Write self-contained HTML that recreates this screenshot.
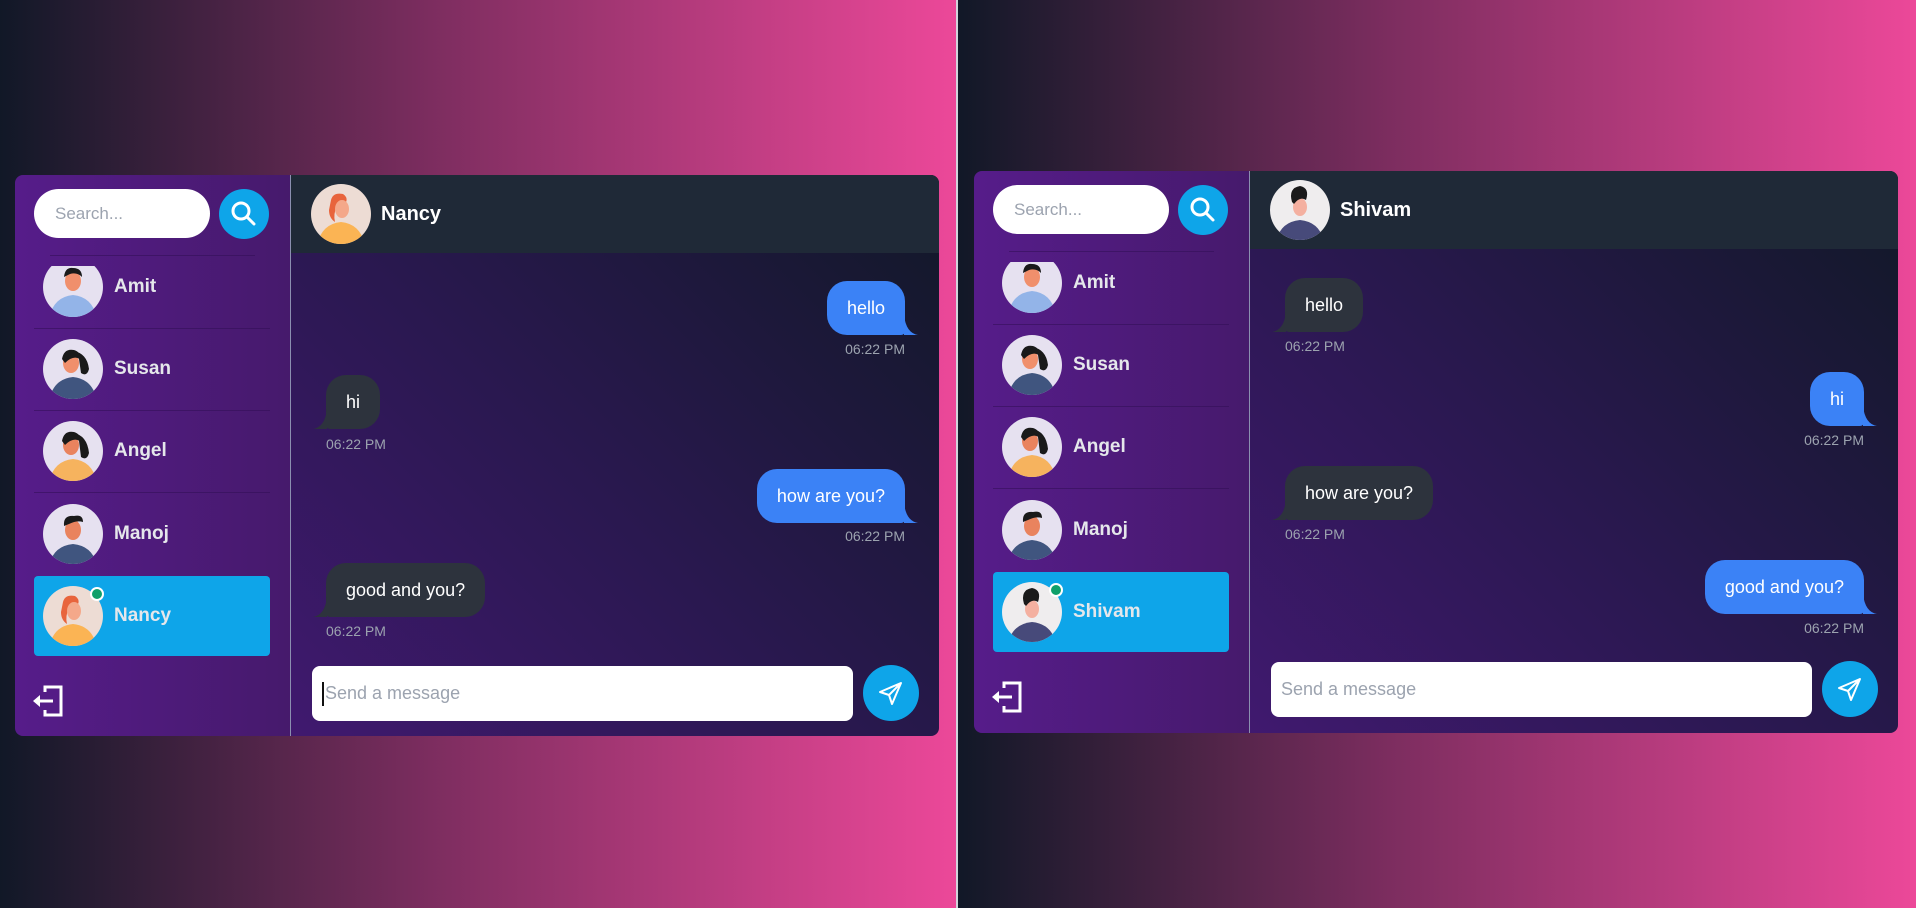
<!DOCTYPE html>
<html><head><meta charset="utf-8"><style>
*{box-sizing:border-box;margin:0;padding:0}
body{width:1916px;height:908px;overflow:hidden;position:relative;font-family:"Liberation Sans",sans-serif;background:#111827}
.half{position:absolute;top:0;height:908px;background:linear-gradient(90deg,#111827 0%,#7c2d5f 45%,#ec4899 100%)}
.divl{position:absolute;left:956px;top:0;width:2px;height:908px;background:#d1d5db}
.panel{position:absolute;width:924px;height:562px;border-radius:8px;overflow:hidden}
.side{position:absolute;left:0;top:0;width:276px;height:100%;background:linear-gradient(90deg,#561c8a,#461a6c);border-right:1px solid #8b8fb0}
.search{position:absolute;left:19px;top:14px;width:176px;height:49px;border-radius:25px;background:#fff;color:#9ca3af;font-size:17px;line-height:49px;padding-left:21px}
.sbtn{position:absolute;left:204px;top:14px;width:50px;height:50px;border-radius:50%;background:#0ea5e9}
.sep{position:absolute;height:1px;background:rgba(50,15,85,.55)}
.list{position:absolute;left:0;top:91px;width:275px;height:400px;overflow:hidden}
.row{position:absolute;left:19px;width:236px;height:80px;border-radius:4px}
.row .av{position:absolute;left:9px;top:10px}
.row .nm{position:absolute;left:80px;top:0;line-height:80px;font-size:19px;font-weight:bold;color:#e5e7eb}
.av{width:60px;height:60px;border-radius:50%;overflow:hidden}
.av svg{display:block}
.dot{position:absolute;left:56px;top:11px;width:14px;height:14px;border-radius:50%;background:#10a06a;border:2px solid #fff}
.chat{position:absolute;left:276px;top:0;right:0;height:100%;background:linear-gradient(45deg,#40196f 0%,#2a1850 45%,#111827 100%)}
.hdr{position:absolute;left:0;top:0;right:0;height:78px;background:#1f2937}
.hdr .av{position:absolute;left:20px;top:9px}
.hdr .nm{position:absolute;left:90px;top:0;line-height:78px;font-size:20px;font-weight:bold;color:#fff}
.b{position:absolute;height:54px;line-height:54px;padding:0 20px;font-size:18px;color:#fff;border-radius:20px}
.s{background:#3b82f6;border-bottom-right-radius:4px}
.r{background:#2d333d;border-bottom-left-radius:4px}
.s svg{position:absolute;right:-13px;bottom:0}
.r svg{position:absolute;left:-13px;bottom:0}
.t{position:absolute;font-size:14px;color:#9ca3af}
.inp{position:absolute;left:21px;top:491px;width:541px;height:55px;border-radius:8px;background:#fff;color:#9ca3af;font-size:18px;line-height:55px;padding-left:10px}
.send{position:absolute;left:572px;top:490px;width:56px;height:56px;border-radius:50%;background:#0ea5e9}
.logout{position:absolute;left:16px;top:509px}
</style></head><body>
<div class="half" style="left:0;width:956px"></div>
<div class="half" style="left:958px;width:958px"></div>
<div class="divl"></div>

<!-- LEFT PANEL -->
<div class="panel" style="left:15px;top:175px;height:561px">
 <div class="side">
  <div class="search">Search...</div>
  <div class="sbtn"><svg width="50" height="50" viewBox="0 0 50 50"><circle cx="22" cy="22" r="8" fill="none" stroke="#fff" stroke-width="3"/><line x1="28" y1="28" x2="35" y2="35" stroke="#fff" stroke-width="3" stroke-linecap="round"/></svg></div>
  <div class="sep" style="left:35px;top:80px;width:205px"></div>
  <div class="list">
   <div class="row" style="top:-19px"><div class="av"><svg width="60" height="60" viewBox="0 0 60 60"><rect width="60" height="60" fill="#e6e1f0"/><path d="M6 62Q10 40 30 38Q50 40 54 62Z" fill="#93b4e8"/><ellipse cx="30" cy="24" rx="8" ry="10" fill="#f08f6c"/><path d="M21 20Q22 10 30 11Q39 11 39 20Q34 15 27 17Z" fill="#1a1a1a"/></svg></div><div class="nm">Amit</div></div>
   <div class="sep" style="left:19px;top:62px;width:236px"></div>
   <div class="row" style="top:63px"><div class="av"><svg width="60" height="60" viewBox="0 0 60 60"><rect width="60" height="60" fill="#e6e1f0"/><path d="M6 62Q10 40 30 38Q50 40 54 62Z" fill="#40557f"/><path d="M30 12Q44 14 46 30Q44 38 38 34L36 20Z" fill="#1a1a1a"/><ellipse cx="28" cy="24" rx="8" ry="10" fill="#f08f6c"/><path d="M19 20Q21 9 31 11Q38 13 37 20Q30 16 22 24Z" fill="#1a1a1a"/></svg></div><div class="nm">Susan</div></div>
   <div class="sep" style="left:19px;top:144px;width:236px"></div>
   <div class="row" style="top:145px"><div class="av"><svg width="60" height="60" viewBox="0 0 60 60"><rect width="60" height="60" fill="#e6e1f0"/><path d="M6 62Q10 40 30 38Q50 40 54 62Z" fill="#f6b35e"/><path d="M30 12Q44 14 46 32Q44 40 38 36L36 20Z" fill="#1a1a1a"/><ellipse cx="28" cy="24" rx="8" ry="10" fill="#e9835e"/><path d="M19 20Q21 9 31 11Q38 13 37 20Q30 16 22 24Z" fill="#1a1a1a"/></svg></div><div class="nm">Angel</div></div>
   <div class="sep" style="left:19px;top:226px;width:236px"></div>
   <div class="row" style="top:228px"><div class="av"><svg width="60" height="60" viewBox="0 0 60 60"><rect width="60" height="60" fill="#e6e1f0"/><path d="M6 62Q10 42 30 40Q50 42 54 62Z" fill="#40557f"/><ellipse cx="30" cy="26" rx="8" ry="10" fill="#e9835e"/><path d="M21 22Q20 11 31 12Q40 10 40 18Q34 16 26 20Z" fill="#1a1a1a"/></svg></div><div class="nm">Manoj</div></div>
   <div class="row" style="top:310px;background:#0ea5e9"><div class="av"><svg width="60" height="60" viewBox="0 0 60 60"><rect width="60" height="60" fill="#eddcd4"/><path d="M6 62Q10 40 30 38Q50 40 54 62Z" fill="#fbb454"/><path d="M20 16Q22 8 32 10Q38 14 34 20L26 22Q22 30 24 38Q18 34 18 26Z" fill="#e8643c"/><ellipse cx="31" cy="25" rx="7" ry="9" fill="#f4a88a"/></svg></div><div class="dot"></div><div class="nm">Nancy</div></div>
  </div>
  <svg class="logout" width="36" height="34" viewBox="0 0 36 34"><path d="M14 8V3H30V31H14V26" fill="none" stroke="#fff" stroke-width="3"/><line x1="6" y1="17" x2="22" y2="17" stroke="#fff" stroke-width="3"/><path d="M2 17L9 11V23Z" fill="#fff"/></svg>
 </div>
 <div class="chat">
  <div class="hdr"><div class="av"><svg width="60" height="60" viewBox="0 0 60 60"><rect width="60" height="60" fill="#eddcd4"/><path d="M6 62Q10 40 30 38Q50 40 54 62Z" fill="#fbb454"/><path d="M20 16Q22 8 32 10Q38 14 34 20L26 22Q22 30 24 38Q18 34 18 26Z" fill="#e8643c"/><ellipse cx="31" cy="25" rx="7" ry="9" fill="#f4a88a"/></svg></div><div class="nm">Nancy</div></div>
  <div class="b s" style="right:34px;top:106px">hello<svg width="14" height="20" viewBox="0 0 14 20"><path d="M0 0Q2 18 14 20H0Z" fill="#3b82f6"/></svg></div>
  <div class="t" style="right:34px;top:166px">06:22 PM</div>
  <div class="b r" style="left:35px;top:200px">hi<svg width="14" height="20" viewBox="0 0 14 20"><path d="M14 0Q12 18 0 20H14Z" fill="#2d333d"/></svg></div>
  <div class="t" style="left:35px;top:261px">06:22 PM</div>
  <div class="b s" style="right:34px;top:294px">how are you?<svg width="14" height="20" viewBox="0 0 14 20"><path d="M0 0Q2 18 14 20H0Z" fill="#3b82f6"/></svg></div>
  <div class="t" style="right:34px;top:353px">06:22 PM</div>
  <div class="b r" style="left:35px;top:388px">good and you?<svg width="14" height="20" viewBox="0 0 14 20"><path d="M14 0Q12 18 0 20H14Z" fill="#2d333d"/></svg></div>
  <div class="t" style="left:35px;top:448px">06:22 PM</div>
  <div class="inp"><span style="display:inline-block;width:2px;height:24px;background:#111;vertical-align:middle;margin-right:1px"></span>Send a message</div>
  <div class="send"><svg width="56" height="56" viewBox="0 0 56 56"><path d="M38 18L17 27L26 30L29 39Z M26 30L38 18" fill="none" stroke="#fff" stroke-width="2" stroke-linejoin="round"/></svg></div>
 </div>
</div>

<!-- RIGHT PANEL -->
<div class="panel" style="left:974px;top:171px">
 <div class="side">
  <div class="search">Search...</div>
  <div class="sbtn"><svg width="50" height="50" viewBox="0 0 50 50"><circle cx="22" cy="22" r="8" fill="none" stroke="#fff" stroke-width="3"/><line x1="28" y1="28" x2="35" y2="35" stroke="#fff" stroke-width="3" stroke-linecap="round"/></svg></div>
  <div class="sep" style="left:35px;top:80px;width:205px"></div>
  <div class="list">
   <div class="row" style="top:-19px"><div class="av"><svg width="60" height="60" viewBox="0 0 60 60"><rect width="60" height="60" fill="#e6e1f0"/><path d="M6 62Q10 40 30 38Q50 40 54 62Z" fill="#93b4e8"/><ellipse cx="30" cy="24" rx="8" ry="10" fill="#f08f6c"/><path d="M21 20Q22 10 30 11Q39 11 39 20Q34 15 27 17Z" fill="#1a1a1a"/></svg></div><div class="nm">Amit</div></div>
   <div class="sep" style="left:19px;top:62px;width:236px"></div>
   <div class="row" style="top:63px"><div class="av"><svg width="60" height="60" viewBox="0 0 60 60"><rect width="60" height="60" fill="#e6e1f0"/><path d="M6 62Q10 40 30 38Q50 40 54 62Z" fill="#40557f"/><path d="M30 12Q44 14 46 30Q44 38 38 34L36 20Z" fill="#1a1a1a"/><ellipse cx="28" cy="24" rx="8" ry="10" fill="#f08f6c"/><path d="M19 20Q21 9 31 11Q38 13 37 20Q30 16 22 24Z" fill="#1a1a1a"/></svg></div><div class="nm">Susan</div></div>
   <div class="sep" style="left:19px;top:144px;width:236px"></div>
   <div class="row" style="top:145px"><div class="av"><svg width="60" height="60" viewBox="0 0 60 60"><rect width="60" height="60" fill="#e6e1f0"/><path d="M6 62Q10 40 30 38Q50 40 54 62Z" fill="#f6b35e"/><path d="M30 12Q44 14 46 32Q44 40 38 36L36 20Z" fill="#1a1a1a"/><ellipse cx="28" cy="24" rx="8" ry="10" fill="#e9835e"/><path d="M19 20Q21 9 31 11Q38 13 37 20Q30 16 22 24Z" fill="#1a1a1a"/></svg></div><div class="nm">Angel</div></div>
   <div class="sep" style="left:19px;top:226px;width:236px"></div>
   <div class="row" style="top:228px"><div class="av"><svg width="60" height="60" viewBox="0 0 60 60"><rect width="60" height="60" fill="#e6e1f0"/><path d="M6 62Q10 42 30 40Q50 42 54 62Z" fill="#40557f"/><ellipse cx="30" cy="26" rx="8" ry="10" fill="#e9835e"/><path d="M21 22Q20 11 31 12Q40 10 40 18Q34 16 26 20Z" fill="#1a1a1a"/></svg></div><div class="nm">Manoj</div></div>
   <div class="row" style="top:310px;background:#0ea5e9"><div class="av"><svg width="60" height="60" viewBox="0 0 60 60"><rect width="60" height="60" fill="#efedee"/><path d="M6 62Q10 42 30 40Q50 42 54 62Z" fill="#474a7a"/><ellipse cx="30" cy="27" rx="7" ry="9" fill="#f4b0a0"/><path d="M22 22Q18 8 30 6Q40 8 36 20Q30 16 24 24Z" fill="#1a1a1a"/></svg></div><div class="dot"></div><div class="nm">Shivam</div></div>
  </div>
  <svg class="logout" width="36" height="34" viewBox="0 0 36 34"><path d="M14 8V3H30V31H14V26" fill="none" stroke="#fff" stroke-width="3"/><line x1="6" y1="17" x2="22" y2="17" stroke="#fff" stroke-width="3"/><path d="M2 17L9 11V23Z" fill="#fff"/></svg>
 </div>
 <div class="chat">
  <div class="hdr"><div class="av"><svg width="60" height="60" viewBox="0 0 60 60"><rect width="60" height="60" fill="#efedee"/><path d="M6 62Q10 42 30 40Q50 42 54 62Z" fill="#474a7a"/><ellipse cx="30" cy="27" rx="7" ry="9" fill="#f4b0a0"/><path d="M22 22Q18 8 30 6Q40 8 36 20Q30 16 24 24Z" fill="#1a1a1a"/></svg></div><div class="nm">Shivam</div></div>
  <div class="b r" style="left:35px;top:107px">hello<svg width="14" height="20" viewBox="0 0 14 20"><path d="M14 0Q12 18 0 20H14Z" fill="#2d333d"/></svg></div>
  <div class="t" style="left:35px;top:167px">06:22 PM</div>
  <div class="b s" style="right:34px;top:201px">hi<svg width="14" height="20" viewBox="0 0 14 20"><path d="M0 0Q2 18 14 20H0Z" fill="#3b82f6"/></svg></div>
  <div class="t" style="right:34px;top:261px">06:22 PM</div>
  <div class="b r" style="left:35px;top:295px">how are you?<svg width="14" height="20" viewBox="0 0 14 20"><path d="M14 0Q12 18 0 20H14Z" fill="#2d333d"/></svg></div>
  <div class="t" style="left:35px;top:355px">06:22 PM</div>
  <div class="b s" style="right:34px;top:389px">good and you?<svg width="14" height="20" viewBox="0 0 14 20"><path d="M0 0Q2 18 14 20H0Z" fill="#3b82f6"/></svg></div>
  <div class="t" style="right:34px;top:449px">06:22 PM</div>
  <div class="inp">Send a message</div>
  <div class="send"><svg width="56" height="56" viewBox="0 0 56 56"><path d="M38 18L17 27L26 30L29 39Z M26 30L38 18" fill="none" stroke="#fff" stroke-width="2" stroke-linejoin="round"/></svg></div>
 </div>
</div>
</body></html>
